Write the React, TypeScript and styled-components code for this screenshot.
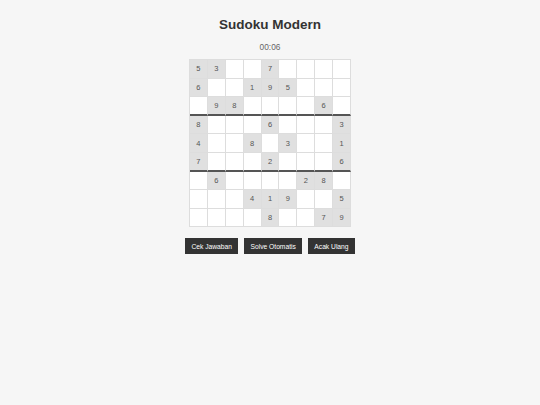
import React from "react";
import styled, { createGlobalStyle } from "styled-components";

const Global = createGlobalStyle`
  html, body { margin: 0; padding: 0; background: #f6f6f6; }
  body { font-family: "Liberation Sans", Arial, sans-serif; }
`;

const Page = styled.div`
  display: flex;
  flex-direction: column;
  align-items: center;
  padding-top: 16px;
  width: 540px;
`;

const Title = styled.h1`
  margin: 0;
  font-size: 13.5px;
  line-height: 17px;
  font-weight: bold;
  color: #333;
`;

const Timer = styled.div`
  margin-top: 9px;
  font-size: 8.3px;
  line-height: 10px;
  color: #666;
`;

const Board = styled.div`
  margin-top: 7px;
  width: 161px;
  display: grid;
  grid-template-columns: repeat(9, 1fr);
  border-top: 1px solid #ddd;
  border-left: 1px solid #ddd;
`;

const Cell = styled.div<{ $fixed: boolean; $thick: boolean }>`
  box-sizing: border-box;
  height: 18.6px;
  display: flex;
  align-items: center;
  justify-content: center;
  font-size: 7.5px;
  color: #555;
  background: ${(p) => (p.$fixed ? "#e0e0e0" : "#ffffff")};
  border-right: 1px solid #ddd;
  border-bottom: ${(p) => (p.$thick ? "2px solid #555" : "1px solid #ddd")};
`;

const Actions = styled.div`
  margin-top: 11px;
  display: flex;
  gap: 5.5px;
`;

const Button = styled.button`
  height: 16px;
  padding: 0 6.5px;
  border: none;
  border-radius: 0;
  background: #333;
  color: #fff;
  font-family: "Liberation Sans", Arial, sans-serif;
  font-size: 6.7px;
  cursor: pointer;
`;

const puzzle = [
  "53..7....",
  "6..195...",
  ".98....6.",
  "8...6...3",
  "4..8.3..1",
  "7...2...6",
  ".6....28.",
  "...419..5",
  "....8..79",
];

export default function App() {
  return (
    <>
      <Global />
      <Page>
        <Title>Sudoku Modern</Title>
        <Timer>00:06</Timer>
        <Board>
          {puzzle.map((row, r) =>
            row.split("").map((ch, c) => (
              <Cell
                key={`${r}-${c}`}
                $fixed={ch !== "."}
                $thick={r === 2 || r === 5}
              >
                {ch !== "." ? ch : ""}
              </Cell>
            ))
          )}
        </Board>
        <Actions>
          <Button>Cek Jawaban</Button>
          <Button>Solve Otomatis</Button>
          <Button>Acak Ulang</Button>
        </Actions>
      </Page>
    </>
  );
}
